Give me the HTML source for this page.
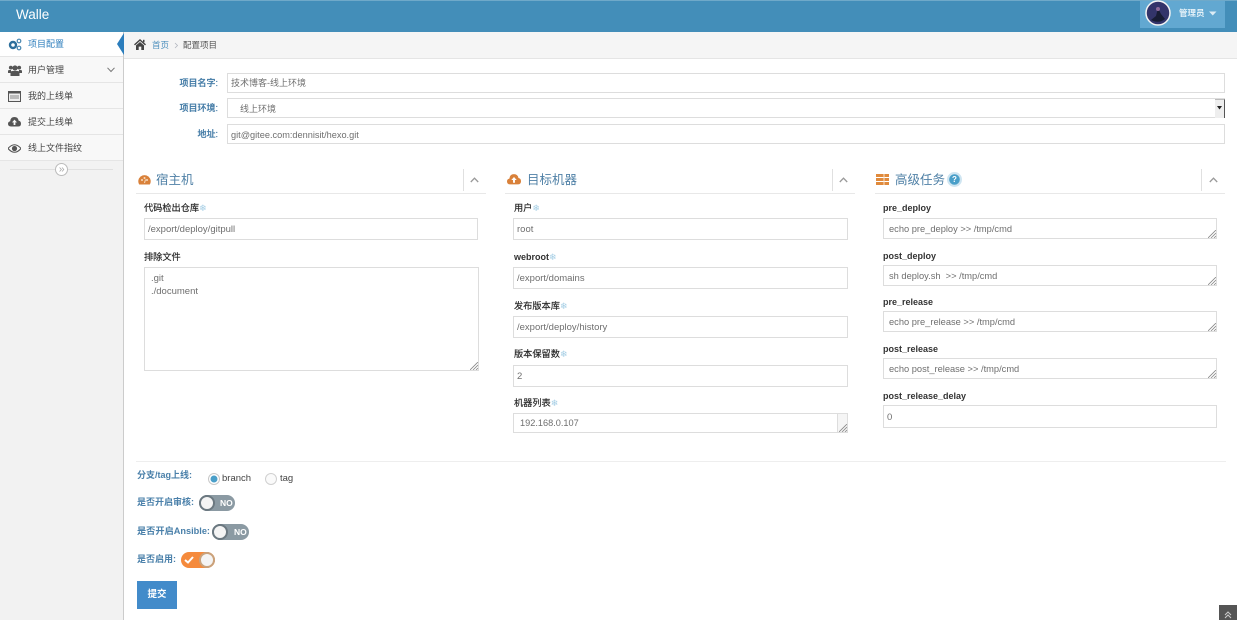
<!DOCTYPE html>
<html lang="zh"><head><meta charset="utf-8"><title>Walle</title>
<style>
*{box-sizing:border-box}
html,body{margin:0;padding:0;width:1240px;height:620px;overflow:hidden;background:#fff}
body{position:relative;font-family:"Liberation Sans","Noto Sans CJK SC",sans-serif;color:#393939;font-size:10px;filter:blur(.3px)}
.a{position:absolute;white-space:nowrap}
svg{position:absolute;display:block}
.nav{left:0;top:0;width:1237px;height:32px;background:#438eb9;border-top:1px solid #6fa9c9}
.side{left:0;top:32px;width:124px;height:588px;background:#f2f2f2;border-right:1px solid #ccc}
.mi{left:0;width:123px;height:26px;background:#f8f8f8;border-bottom:1px solid #e5e5e5;color:#444;font-size:9px;line-height:26px;padding-left:28px}
.lb{font-size:9px;font-weight:500;color:#3f78a4;text-align:right;-webkit-text-stroke:.15px #3f78a4}
.in{background:#fff;border:1px solid #ddd;color:#6f6f6f;font-size:9.500px;padding-left:3px;overflow:hidden}
.h{font-size:12.500px;color:#4f80a6;line-height:16px}
.hr{height:1px;background:#e8e8e8}
.fl{font-size:9px;font-weight:700;color:#333;line-height:12px}
.cj{font-size:9.200px;font-weight:400;color:#222;-webkit-text-stroke:.15px #222}
.star{color:#a3cde4;font-size:9px;font-weight:400;-webkit-text-stroke:0}
.vs{width:1px;height:22px;top:169px;background:#e0e0e0}
.sl{font-size:9.200px;font-weight:700;color:#4a80aa;line-height:12px}
.tg{height:16px;border-radius:8px;background:#8b9aa3}
.kn{position:absolute;top:0;width:16px;height:16px;border-radius:50%;background:#f4f4f4;border:2px solid #6b7880}
</style></head><body>

<div class="a nav"></div>
<div class="a" style="left:16px;top:6px;font-size:13.500px;color:#fff;line-height:17px">Walle</div>
<div class="a" style="left:1140px;top:1px;width:85px;height:27px;background:#62a8d1"></div>
<svg style="left:1145px;top:0" width="27" height="27" viewBox="0 0 27 27"><circle cx="13" cy="13" r="12" fill="#33346a" stroke="#f4f4f4" stroke-width="1.500"/><path d="M6 20 L11 16 L13 8 L16 14 L20 19 Q14 24 6 20Z" fill="#181c34"/><circle cx="13" cy="9" r="2" fill="#8d6a9a"/></svg>
<div class="a" style="left:1179px;top:7px;font-size:8.500px;font-weight:700;color:#e4f1f8;line-height:12px">管理员</div>
<svg style="left:1209px;top:11px" width="8" height="5"><path d="M0 0.500H7.500L3.750 4.500Z" fill="#dcecf5"/></svg>

<div class="a side"></div>
<div class="a mi" style="top:32px;height:25px;background:#fff;color:#2b7dbc;line-height:24px">项目配置</div>
<div class="a" style="left:0;top:56px;width:123px;height:1px;background:#e5e5e5"></div>
<div class="a mi" style="top:57px">用户管理</div>
<div class="a mi" style="top:83px">我的上线单</div>
<div class="a mi" style="top:109px">提交上线单</div>
<div class="a mi" style="top:135px">线上文件指纹</div>
<svg style="left:117px;top:33px" width="7" height="22"><path d="M7 0V22L0 11Z" fill="#2b7dbc"/></svg>
<svg style="left:107px;top:67px" width="8" height="6"><path d="M0.500 0.800L4 4.500L7.500 0.800" fill="none" stroke="#777" stroke-width="1"/></svg>

<svg style="left:8px;top:38px" width="14" height="13" viewBox="0 0 14 13"><circle cx="5" cy="7" r="3" fill="none" stroke="#2d6f9c" stroke-width="2.400"/><circle cx="11" cy="3" r="1.800" fill="none" stroke="#4a88b2" stroke-width="1.200"/><circle cx="11" cy="10" r="1.800" fill="none" stroke="#4a88b2" stroke-width="1.200"/></svg>
<svg style="left:8px;top:64px" width="14" height="13" viewBox="0 0 14 13"><circle cx="7" cy="4" r="2.600" fill="#555"/><circle cx="2.800" cy="3.600" r="1.900" fill="#555"/><circle cx="11.200" cy="3.600" r="1.900" fill="#555"/><path d="M2.500 12V8.500Q2.500 7 4.500 7H9.500Q11.500 7 11.500 8.500V12Z" fill="#555"/><path d="M0 9V7Q0 6 1.500 6H3V9ZM14 9V7Q14 6 12.500 6H11V9Z" fill="#555"/></svg>
<svg style="left:8px;top:91px" width="13" height="11" viewBox="0 0 13 11"><rect x=".5" y=".5" width="12" height="10" fill="#eee" stroke="#555"/><rect x="0" y="0" width="13" height="2.500" fill="#555"/><path d="M2 5H11M2 7H11" stroke="#888" stroke-width="1"/></svg>
<svg style="left:8px;top:116px" width="13" height="11" viewBox="0 0 13 11"><path d="M3 10.500Q0 10.500 0 7.800Q0 5.600 2.200 5.200Q2.600 1 6.500 1Q10 1 10.600 4.600Q13 5 13 7.700Q13 10.500 10 10.500Z" fill="#555"/><path d="M6.500 3.600L9 6.400H7.400V9H5.600V6.400H4Z" fill="#f8f8f8"/></svg>
<svg style="left:8px;top:144px" width="13" height="9" viewBox="0 0 13 9"><path d="M0 4.500Q6.500 -3 13 4.500Q6.500 12 0 4.500Z" fill="none" stroke="#555" stroke-width="1.100"/><circle cx="6.500" cy="4.500" r="2.600" fill="#555"/></svg>

<div class="a" style="left:10px;top:169px;width:103px;height:1px;background:#e0e0e0"></div>
<svg style="left:55px;top:163px" width="13" height="13" viewBox="0 0 13 13"><circle cx="6.500" cy="6.500" r="6" fill="#fff" stroke="#bbb"/><path d="M4.600 4.500L6.400 6.500L4.600 8.500M7 4.500L8.800 6.500L7 8.500" fill="none" stroke="#aaa" stroke-width=".8"/></svg>

<div class="a" style="left:124px;top:32px;width:1113px;height:27px;background:#f5f5f5;border-bottom:1px solid #e5e5e5"></div>
<svg style="left:134px;top:39px" width="12" height="11" viewBox="0 0 12 11"><path d="M6 0L12 5.400L11 6.400L6 1.900L1 6.400L0 5.400Z" fill="#444"/><path d="M2 6.400L6 3L10 6.400V11H7.300V7.600H4.700V11H2Z" fill="#444"/><rect x="9" y=".8" width="1.500" height="2.500" fill="#444"/></svg>
<div class="a" style="left:152px;top:39px;font-size:8.500px;line-height:12px;color:#4c8fbd">首页</div>
<svg style="left:174px;top:42px" width="5" height="7"><path d="M1 1L3.500 3.500L1 6" fill="none" stroke="#b2b6bf" stroke-width=".8"/></svg>
<div class="a" style="left:183px;top:39px;font-size:8.500px;line-height:12px;color:#555">配置项目</div>

<!-- top form -->
<div class="a lb" style="left:130px;top:77px;width:88px;line-height:12px">项目名字:</div>
<div class="a in" style="left:227px;top:73px;width:998px;height:20px;line-height:19px;font-size:9px">技术博客-线上环境</div>
<div class="a lb" style="left:130px;top:102px;width:88px;line-height:12px">项目环境:</div>
<div class="a in" style="left:227px;top:98px;width:998px;height:20px;line-height:20px;font-size:9px;padding-left:12px">线上环境</div>
<div class="a" style="left:1215px;top:99px;width:10px;height:19px;background:#eee;border-right:1px solid #555;border-top:1px solid #bbb"></div>
<svg style="left:1217px;top:106px" width="5" height="4"><path d="M0 0H5L2.500 3.500Z" fill="#222"/></svg>
<div class="a lb" style="left:130px;top:128px;width:88px;line-height:12px">地址:</div>
<div class="a in" style="left:227px;top:124px;width:998px;height:20px;line-height:20px;font-size:9.200px">git@gitee.com:dennisit/hexo.git</div>

<!-- col 1 -->
<svg style="left:138px;top:174px" width="13" height="12" viewBox="0 0 13 12"><path d="M1.200 10.500A6.200 6.200 0 1 1 11.800 10.500Z" fill="#d9813a"/><circle cx="4" cy="6" r="1" fill="#f6dcc0"/><circle cx="6.500" cy="4" r="1" fill="#f6dcc0"/><circle cx="9" cy="6" r="1" fill="#f6dcc0"/><path d="M6.500 9L7.500 5.500" stroke="#f6dcc0"/></svg>
<div class="a h" style="left:156px;top:172px">宿主机</div>
<div class="a vs" style="left:463px"></div>
<svg style="left:470px;top:177px" width="9" height="6"><path d="M.8 5L4.500 1.200L8.200 5" fill="none" stroke="#999" stroke-width="1.300"/></svg>
<div class="a hr" style="left:136px;top:193px;width:350px"></div>
<div class="a fl cj" style="left:144px;top:202px">代码检出仓库<span class="star">❄</span></div>
<div class="a in" style="left:144px;top:218px;width:334px;height:22px;line-height:22px">/export/deploy/gitpull</div>
<div class="a fl cj" style="left:144px;top:251px">排除文件</div>
<div class="a in" style="left:144px;top:267px;width:335px;height:104px;line-height:13px;padding:4px 0 0 6px;white-space:pre">.git
./document</div>
<svg style="left:470px;top:362px" width="8" height="8"><path d="M0 8L8 0M3 8L8 3M6 8L8 6" stroke="#888" stroke-width=".8"/></svg>

<!-- col 2 -->
<svg style="left:507px;top:173px" width="14" height="12" viewBox="0 0 13 11"><path d="M3 10.500Q0 10.500 0 7.800Q0 5.600 2.200 5.200Q2.600 1 6.500 1Q10 1 10.600 4.600Q13 5 13 7.700Q13 10.500 10 10.500Z" fill="#d9813a"/><path d="M6.500 3.600L9 6.400H7.400V9H5.600V6.400H4Z" fill="#fff"/></svg>
<div class="a h" style="left:527px;top:172px">目标机器</div>
<div class="a vs" style="left:832px"></div>
<svg style="left:839px;top:177px" width="9" height="6"><path d="M.8 5L4.500 1.200L8.200 5" fill="none" stroke="#999" stroke-width="1.300"/></svg>
<div class="a hr" style="left:505px;top:193px;width:350px"></div>
<div class="a fl cj" style="left:514px;top:202px">用户<span class="star">❄</span></div>
<div class="a in" style="left:513px;top:218px;width:335px;height:22px;line-height:22px">root</div>
<div class="a fl" style="left:514px;top:251px">webroot<span class="star">❄</span></div>
<div class="a in" style="left:513px;top:267px;width:335px;height:22px;line-height:22px">/export/domains</div>
<div class="a fl cj" style="left:514px;top:300px">发布版本库<span class="star">❄</span></div>
<div class="a in" style="left:513px;top:316px;width:335px;height:22px;line-height:22px">/export/deploy/history</div>
<div class="a fl cj" style="left:514px;top:348px">版本保留数<span class="star">❄</span></div>
<div class="a in" style="left:513px;top:365px;width:335px;height:22px;line-height:22px">2</div>
<div class="a fl cj" style="left:514px;top:397px">机器列表<span class="star">❄</span></div>
<div class="a in" style="left:513px;top:413px;width:335px;height:20px;line-height:19px;padding-left:6px;font-size:9.200px">192.168.0.107</div>
<div class="a" style="left:837px;top:414px;width:10px;height:18px;background:#f5f5f5;border-left:1px solid #ddd"></div>
<svg style="left:839px;top:424px" width="8" height="8"><path d="M0 8L8 0M3 8L8 3M6 8L8 6" stroke="#888" stroke-width=".8"/></svg>

<!-- col 3 -->
<svg style="left:876px;top:174px" width="13" height="11"><rect width="13" height="3" fill="#e08a3c"/><rect y="4" width="13" height="3" fill="#e08a3c"/><rect y="8" width="13" height="3" fill="#e08a3c"/><path d="M8 0V11" stroke="#f8e0c8"/></svg>
<div class="a h" style="left:895px;top:172px">高级任务</div>
<svg style="left:947px;top:172px" width="15" height="15"><circle cx="7.500" cy="7.500" r="7.500" fill="#cfe5f1"/><circle cx="7.500" cy="7.500" r="5.300" fill="#4a9fc9"/></svg>
<div class="a" style="left:947px;top:174px;width:15px;text-align:center;font-size:8px;font-weight:700;color:#fff;line-height:12px">?</div>
<div class="a vs" style="left:1201px"></div>
<svg style="left:1209px;top:177px" width="9" height="6"><path d="M.8 5L4.500 1.200L8.200 5" fill="none" stroke="#999" stroke-width="1.300"/></svg>
<div class="a hr" style="left:875px;top:193px;width:350px"></div>
<div class="a fl" style="left:883px;top:202px">pre_deploy</div>
<div class="a in" style="left:883px;top:218px;width:334px;height:21px;line-height:20px;padding-left:5px;font-size:9.300px">echo pre_deploy &gt;&gt; /tmp/cmd</div>
<svg style="left:1208px;top:230px" width="8" height="8"><path d="M0 8L8 0M3 8L8 3M6 8L8 6" stroke="#888" stroke-width=".8"/></svg>
<div class="a fl" style="left:883px;top:250px">post_deploy</div>
<div class="a in" style="left:883px;top:265px;width:334px;height:21px;line-height:21px;padding-left:5px;white-space:pre;font-size:9.300px">sh deploy.sh  &gt;&gt; /tmp/cmd</div>
<svg style="left:1208px;top:277px" width="8" height="8"><path d="M0 8L8 0M3 8L8 3M6 8L8 6" stroke="#888" stroke-width=".8"/></svg>
<div class="a fl" style="left:883px;top:296px">pre_release</div>
<div class="a in" style="left:883px;top:311px;width:334px;height:21px;line-height:21px;padding-left:5px;font-size:9.300px">echo pre_release &gt;&gt; /tmp/cmd</div>
<svg style="left:1208px;top:323px" width="8" height="8"><path d="M0 8L8 0M3 8L8 3M6 8L8 6" stroke="#888" stroke-width=".8"/></svg>
<div class="a fl" style="left:883px;top:343px">post_release</div>
<div class="a in" style="left:883px;top:358px;width:334px;height:21px;line-height:21px;padding-left:5px;font-size:9.300px">echo post_release &gt;&gt; /tmp/cmd</div>
<svg style="left:1208px;top:370px" width="8" height="8"><path d="M0 8L8 0M3 8L8 3M6 8L8 6" stroke="#888" stroke-width=".8"/></svg>
<div class="a fl" style="left:883px;top:390px">post_release_delay</div>
<div class="a in" style="left:883px;top:405px;width:334px;height:23px;line-height:23px">0</div>

<div class="a hr" style="left:136px;top:461px;width:1090px;background:#eee"></div>

<!-- bottom -->
<div class="a sl" style="left:137px;top:469px;font-size:9px">分支/tag上线:</div>
<svg style="left:208px;top:473px" width="12" height="12"><circle cx="6" cy="6" r="5.500" fill="#fff" stroke="#c8c8c8"/><circle cx="6" cy="6" r="3.500" fill="#4a9fc9"/></svg>
<div class="a" style="left:222px;top:472px;font-size:9.500px;line-height:13px;color:#444">branch</div>
<svg style="left:265px;top:473px" width="12" height="12"><circle cx="6" cy="6" r="5.500" fill="#fafafa" stroke="#d0d0d0"/></svg>
<div class="a" style="left:280px;top:472px;font-size:9.500px;line-height:13px;color:#444">tag</div>

<div class="a sl" style="left:137px;top:496px;font-size:9px">是否开启审核:</div>
<div class="a tg" style="left:199px;top:495px;width:36px"><div class="kn" style="left:0"></div></div>
<div class="a" style="left:220px;top:497px;font-size:8.500px;font-weight:700;color:#fff;line-height:12px">NO</div>
<div class="a sl" style="left:137px;top:525px">是否开启Ansible:</div>
<div class="a tg" style="left:212px;top:524px;width:37px"><div class="kn" style="left:0"></div></div>
<div class="a" style="left:234px;top:526px;font-size:8.500px;font-weight:700;color:#fff;line-height:12px">NO</div>
<div class="a sl" style="left:137px;top:553px;font-size:9px">是否启用:</div>
<div class="a tg" style="left:181px;top:552px;width:34px;background:#f58a3c"><div class="kn" style="left:18px;border-color:#c9a27c"></div></div>
<svg style="left:184px;top:556px" width="10" height="8"><path d="M1 4L4 6.500L9 1" fill="none" stroke="#fff" stroke-width="2"/></svg>

<div class="a" style="left:137px;top:581px;width:40px;height:28px;background:#428bca;color:#fff;font-size:9.500px;font-weight:700;text-align:center;line-height:27px">提交</div>

<div class="a" style="left:1219px;top:605px;width:18px;height:15px;background:#555"></div>
<svg style="left:1224px;top:611px" width="8" height="8"><path d="M1 4L4 1L7 4M1 7L4 4L7 7" fill="none" stroke="#ccc" stroke-width="1"/></svg>
</body></html>
